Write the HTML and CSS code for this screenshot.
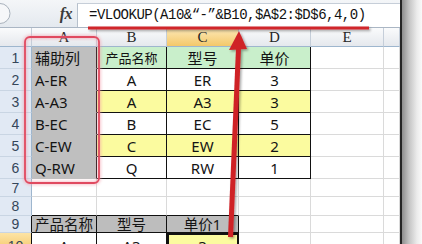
FILE: index.html
```html
<!DOCTYPE html>
<html lang="zh">
<head>
<meta charset="utf-8">
<title>VLOOKUP</title>
<link rel="stylesheet" href="styles.css">
</head>
<body>
<div class="screen">
  <div class="window">
    <div class="fbar">
      <div class="namebox">
        <svg class="grip" width="14" height="28" viewBox="0 0 14 28"><path d="M0 3.5 A10 10 0 0 1 0 23.5" fill="#f6f7f9" stroke="#a9b2bc" stroke-width="1"/></svg>
        <i class="fx">fx</i>
      </div>
      <div class="finput">=VLOOKUP(A10&amp;“-”&amp;B10,$A$2:$D$6,4,0)</div>
    </div>
    <div class="sheet">
      <div class="c ch"></div><div class="c ch">A</div><div class="c ch">B</div><div class="c ch sel">C</div><div class="c ch">D</div><div class="c ch">E</div><div class="c ch"></div>

      <div class="c rh">1</div><div class="c g left kr">辅助列</div><div class="c grn k sm">产品名称</div><div class="c grn k">型号</div><div class="c grn k">单价</div><div class="c"></div><div class="c"></div>
      <div class="c rh">2</div><div class="c g left kr">A-ER</div><div class="c k">A</div><div class="c k">ER</div><div class="c k">3</div><div class="c"></div><div class="c"></div>
      <div class="c rh">3</div><div class="c g left kr">A-A3</div><div class="c yel k">A</div><div class="c yel k">A3</div><div class="c yel k">3</div><div class="c"></div><div class="c"></div>
      <div class="c rh">4</div><div class="c g left kr">B-EC</div><div class="c k">B</div><div class="c k">EC</div><div class="c k">5</div><div class="c"></div><div class="c"></div>
      <div class="c rh">5</div><div class="c g left kr">C-EW</div><div class="c yel k">C</div><div class="c yel k">EW</div><div class="c yel k">2</div><div class="c"></div><div class="c"></div>
      <div class="c rh">6</div><div class="c g left kr">Q-RW</div><div class="c k">Q</div><div class="c k">RW</div><div class="c k">1</div><div class="c"></div><div class="c"></div>
      <div class="c rh">7</div><div class="c"></div><div class="c"></div><div class="c"></div><div class="c"></div><div class="c"></div><div class="c"></div>
      <div class="c rh">8</div><div class="c kb"></div><div class="c kb"></div><div class="c kb"></div><div class="c"></div><div class="c"></div><div class="c"></div>
      <div class="c rh kr">9</div><div class="c g9 k t9">产品名称</div><div class="c g9 k t9">型号</div><div class="c g9 k t9">单价1</div><div class="c"></div><div class="c"></div><div class="c"></div>
      <div class="c rh sel kr r10">10</div><div class="c k r10">A</div><div class="c k r10">A3</div><div class="c yel k cur r10">3</div><div class="c"></div><div class="c"></div><div class="c"></div>
    </div>
  </div>
  <div class="edge"></div>

  <svg class="marks" width="422" height="244" viewBox="0 0 422 244">
    <defs>
      <filter id="sh" filterUnits="userSpaceOnUse" x="0" y="0" width="422" height="244">
        <feDropShadow dx="1.5" dy="1.5" stdDeviation="1.1" flood-color="#000" flood-opacity="0.35"/>
      </filter>
      <filter id="glow" filterUnits="userSpaceOnUse" x="0" y="0" width="422" height="244">
        <feGaussianBlur stdDeviation="1.6"/>
      </filter>
    </defs>
    <rect x="25" y="37" width="74" height="146" rx="5" fill="none" stroke="#f39aa8" stroke-width="4" opacity="0.55" filter="url(#glow)"/>
    <rect x="25" y="37" width="74" height="146" rx="5" fill="none" stroke="#e04a60" stroke-width="1.8"/>
    <line x1="88" y1="28" x2="369" y2="28" stroke="#d0252a" stroke-width="3" filter="url(#sh)"/>
    <g fill="#cf2227" filter="url(#sh)">
      <polygon points="228,237 233,237 241,48 236,48"/>
      <polygon points="239,31 229,50 247,49"/>
    </g>
  </svg>
</div>
</body>
</html>
```
FILE: styles.css
```css
html, body {
  margin: 0;
  padding: 0;
}
body {
  width: 422px;
  height: 244px;
  overflow: hidden;
  background: #fff;
  font-family: "Noto Sans", "Noto Sans CJK SC", sans-serif;
}
.screen {
  position: relative;
  display: flex;
  width: 422px;
  height: 244px;
  overflow: hidden;
}
.window {
  width: 400px;
  display: flex;
  flex-direction: column;
  overflow: hidden;
}
.edge {
  width: 22px;
  box-sizing: border-box;
  border-left: 2px solid #262626;
  background: linear-gradient(90deg, #8e8e8e, #c4c4c4 35%, #ececec 75%, #fafafa);
}
.fbar {
  height: 28px;
  flex: none;
  display: flex;
  box-sizing: border-box;
  background: linear-gradient(#f4f6f8, #e4e9ef);
  border-bottom: 1px solid #aab6c4;
}
.namebox {
  width: 77px;
  display: flex;
  align-items: center;
}
.grip {
  display: block;
}
.fx {
  margin-left: auto;
  margin-right: 5px;
  font-family: "Liberation Serif", serif;
  font-size: 16px;
  font-weight: bold;
  color: #3a3a3a;
  letter-spacing: -0.5px;
}
.finput {
  flex: 1;
  margin-top: 3px;
  background: #fff;
  border-left: 1px solid #b6c0cc;
  border-top: 1px solid #c6ced8;
  padding-left: 11px;
  font-family: "Liberation Mono", monospace;
  font-size: 14px;
  letter-spacing: -0.5px;
  line-height: 22px;
  color: #111;
  white-space: nowrap;
}
.sheet {
  display: grid;
  grid-template-columns: 32px 65px 70px 72px 72px 73px 16px;
  grid-template-rows: 19px repeat(6, 22px) 18px 19px 17px 22px;
}
.c {
  box-sizing: border-box;
  border-right: 1px solid #dadada;
  border-bottom: 1px solid #dadada;
  display: flex;
  align-items: center;
  justify-content: center;
  font-size: 15px;
  line-height: 16px;
  color: #141414;
  white-space: nowrap;
  overflow: hidden;
}
.ch {
  background: linear-gradient(#fafbfc, #e5e8ed);
  border-right-color: #c5ced9;
  border-bottom-color: #9eb6ce;
  font-family: "Liberation Serif", serif;
  font-size: 15px;
  color: #262626;
}
.ch.sel {
  background: linear-gradient(#fde9b8, #f4c86a);
}
.rh {
  background: #e1e9f4;
  border-right-color: #9eb6ce;
  border-bottom-color: #c9d5e3;
  font-family: "Liberation Sans", sans-serif;
  font-size: 14px;
  color: #35465a;
}
.rh.sel {
  background: linear-gradient(#fde4a6, #f3c25e);
}
.r10 {
  align-items: flex-start;
  padding-top: 5px;
}
.g {
  background: #bfbfbf;
  border-bottom-color: #bfbfbf;
}
.g9 {
  background: #bdbdbd;
}
.t9 {
  font-size: 14.5px;
  line-height: 15px;
  overflow: visible;
}
.left {
  justify-content: flex-start;
  padding-left: 3px;
}
.grn {
  background: #c9efcb;
}
.yel {
  background: #fbfb9f;
}
.sm {
  font-size: 13px;
}
.k {
  border-right-color: #111;
  border-bottom-color: #111;
}
.kr {
  border-right-color: #111;
}
.kb {
  border-bottom-color: #111;
}
.cur {
  outline: 2px solid #111;
  outline-offset: -2px;
}
.marks {
  position: absolute;
  left: 0;
  top: 0;
  pointer-events: none;
}
```
